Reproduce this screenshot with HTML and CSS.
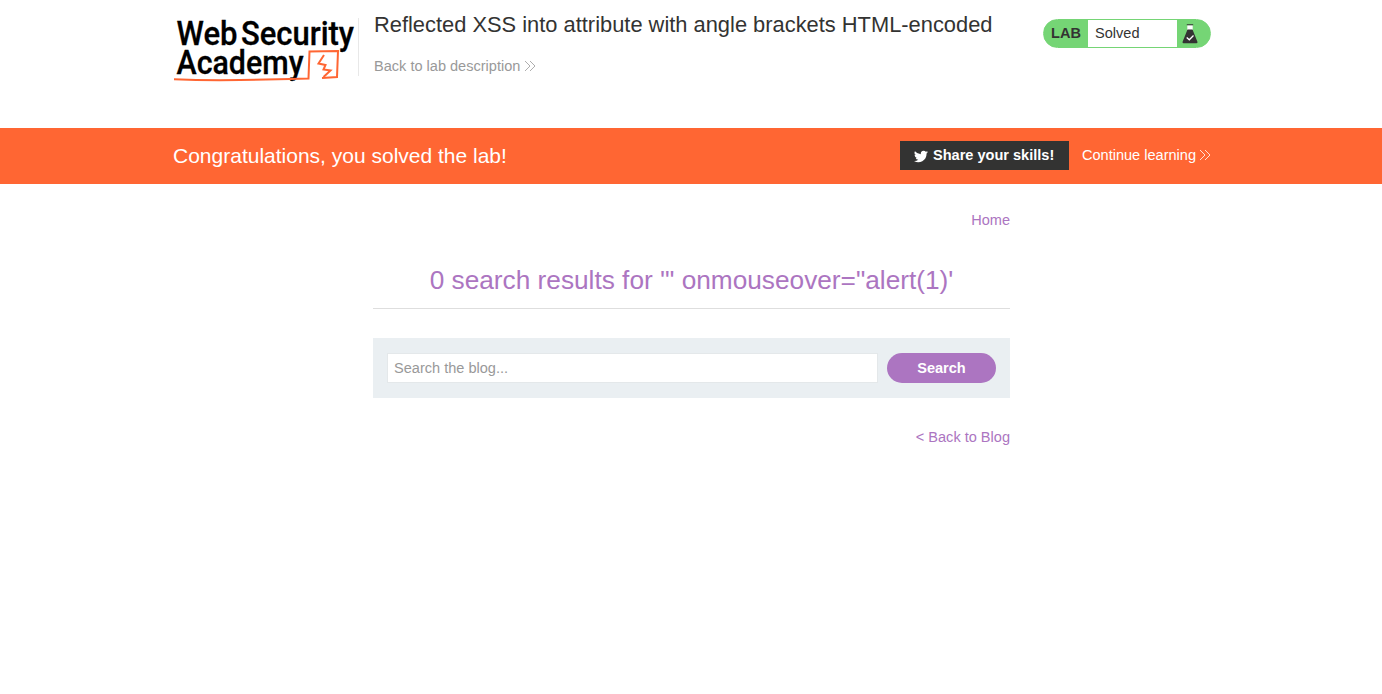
FILE: index.html
```html
<!DOCTYPE html>
<html lang="en">
<head>
<meta charset="utf-8">
<title>Reflected XSS into attribute with angle brackets HTML-encoded</title>
<link rel="stylesheet" href="styles.css">
</head>
<body>
<header class="lab-header">
  <svg class="logo" viewBox="0 0 186 72" role="img" aria-label="Web Security Academy">
    <g class="logo-text">
      <text x="2.500" y="31.600" textLength="61" lengthAdjust="spacingAndGlyphs">Web</text>
      <text x="67" y="31.600" textLength="113" lengthAdjust="spacingAndGlyphs">Security</text>
      <text x="2.500" y="61.300" textLength="127" lengthAdjust="spacingAndGlyphs">Academy</text>
    </g>
    <path class="logo-line" d="M0 66.300Q30 67.500 66 67L116 66L134.500 65.500L135.500 38.500L164 38L163 64L148 65"/>
    <path class="logo-bolt" d="M150 42L144.500 50.500L151.500 52L149.500 56.500L156.500 57.500L149.500 64"/>
  </svg>
  <div class="title-area">
    <h2 class="title">Reflected XSS into attribute with angle brackets HTML-encoded</h2>
    <a class="back-link">Back to lab description<svg class="chevrons" viewBox="0 0 12 12"><path d="M1 1L6 6L1 11M6 1L11 6L6 11"/></svg></a>
  </div>
  <div class="lab-status">
    <span class="lab-tag">LAB</span>
    <span class="lab-state">Solved</span>
    <span class="lab-icon"><svg class="flask" viewBox="0 0 16 20"><path class="flask-gap" d="M5.300 1.200H10.700V6H5.300Z"/><path class="flask-body" d="M4.800 .3H11.200V1.300H4.800ZM5.500 5.500H10.500L15.500 18Q15.500 19.300 14.500 19.300H1.500Q.5 19.300 .5 18Z"/><path class="flask-check" d="M4.700 13.500L7.300 15.800L11.500 11.500"/></svg></span>
  </div>
</header>
<section class="banner">
  <div class="banner-inner">
    <h4 class="banner-title">Congratulations, you solved the lab!</h4>
    <a class="share"><svg class="bird" viewBox="0 0 24 20"><path d="M24 2.400a10 10 0 0 1-2.800.8A5 5 0 0 0 23.300.5a10 10 0 0 1-3.100 1.200A4.900 4.900 0 0 0 11.800 6.200 14 14 0 0 1 1.700 1a4.900 4.900 0 0 0 1.500 6.600A5 5 0 0 1 1 7v.1A4.900 4.900 0 0 0 4.900 12a5 5 0 0 1-2.200.1 4.900 4.900 0 0 0 4.600 3.400A9.900 9.900 0 0 1 0 17.500 14 14 0 0 0 21.500 5.700V5A10 10 0 0 0 24 2.400Z"/></svg>Share your skills!</a>
    <a class="continue">Continue learning<svg class="chevrons" viewBox="0 0 12 12"><path d="M1 1L6 6L1 11M6 1L11 6L6 11"/></svg></a>
  </div>
</section>
<main class="content">
  <nav class="nav"><a>Home</a></nav>
  <h1 class="results">0 search results for '" onmouseover="alert(1)'</h1>
  <form class="search">
    <input class="search-input" type="text" placeholder="Search the blog...">
    <button class="search-button" type="button">Search</button>
  </form>
  <div class="back-to-blog"><a>&lt; Back to Blog</a></div>
</main>
</body>
</html>
```

FILE: styles.css
```css
* { box-sizing: border-box; }
body {
  margin: 0;
  background: #fff;
  color: #333332;
  font: 14.56px/20px "Liberation Sans", Arial, sans-serif;
}
h1, h2, h4 { margin: 0; font-weight: 400; }
.lab-header {
  display: flex;
  align-items: flex-start;
  width: 1040px;
  height: 128px;
  margin: 0 auto;
  padding-top: 10px;
}
.logo {
  width: 186px;
  height: 72px;
  flex: none;
  margin-top: 3px;
  margin-left: 3px;
  overflow: visible;
}
.logo-text {
  font-family: Roboto, sans-serif;
  font-size: 33px;
  font-weight: 500;
  fill: #000;
  stroke: #000;
  stroke-width: .3;
}
.logo-line, .logo-bolt { fill: none; stroke: #ff6633; stroke-width: 2; }
.title-area {
  display: flex;
  flex-direction: column;
  flex: 1;
  gap: 16px;
  height: 72px;
  margin-left: -2px;
  padding-left: 16px;
  background: linear-gradient(#e8e8e8, #e8e8e8) 0 8px / 1px 58px no-repeat;
}
.title { font-size: 21.86px; line-height: 30px; white-space: nowrap; }
.back-link { color: #999; }
.chevrons {
  width: 12px;
  height: 12px;
  margin-left: 4px;
  vertical-align: -1px;
  fill: none;
  stroke: currentColor;
  stroke-width: .8;
}
.lab-status {
  display: flex;
  width: 168px;
  height: 29px;
  margin-top: 9px;
  border: 1px solid #75d575;
  border-radius: 15px;
  background: linear-gradient(90deg, #75d575 44px, #fff 44px 133px, #75d575 133px);
  background-origin: border-box;
  background-position: 1px 0;
  line-height: 27px;
}
.lab-tag { width: 44px; padding-left: 7px; font-weight: 700; }
.lab-state { flex: 1; padding-left: 7px; }
.lab-icon { width: 33px; padding: 4px 0 0 5px; }
.flask { display: block; width: 16px; height: 20px; }
.flask-gap { fill: #fff; }
.flask-body { fill: #333332; }
.flask-check { fill: none; stroke: #fff; stroke-width: 1.3; }
.banner { height: 56px; background: #ff6633; color: #fff; }
.banner-inner {
  display: flex;
  align-items: center;
  width: 1040px;
  height: 55px;
  margin: 0 auto;
}
.banner-title { flex: 1; padding-left: 2px; font-size: 21px; }
.share {
  display: flex;
  align-items: center;
  width: 169px;
  height: 29px;
  margin-right: 13px;
  padding: 0 0 1px 14px;
  background: #333332;
  font-weight: 700;
}
.continue { padding-bottom: 1px; }
.continue .chevrons { margin-left: 3px; }
.bird { width: 14px; height: 13px; margin: 2px 5px 0 0; fill: #fff; }
.content { width: 638px; margin: 0 auto; padding-left: 1px; color: #ac75c1; }
.nav { padding-top: 26px; text-align: right; }
.results {
  height: 79px;
  padding-top: 35px;
  border-bottom: 1px solid #dedede;
  font-size: 26.24px;
  line-height: 30px;
  text-align: center;
}
.search {
  display: flex;
  gap: 9px;
  height: 60px;
  margin: 29px 0;
  padding: 15px 14px;
  background: #eaeff2;
}
.search-input {
  flex: 1;
  min-width: 0;
  padding: 0 6px;
  border: 1px solid #e4e8ea;
  font: inherit;
}
.search-input::placeholder { color: #999; }
.search-button {
  width: 109px;
  border: 0;
  border-radius: 15px;
  background: #ac75c1;
  color: #fff;
  font: inherit;
  font-weight: 700;
}
.back-to-blog { text-align: right; }
```
